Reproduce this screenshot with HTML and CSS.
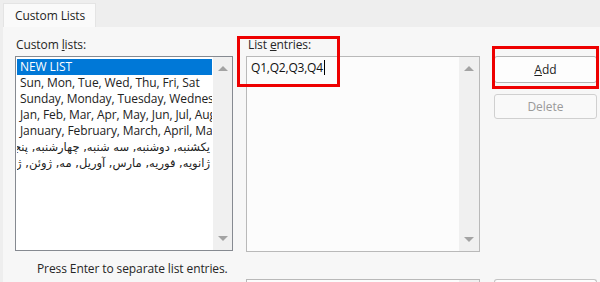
FILE: index.html
```html
<!DOCTYPE html>
<html lang="en">
<head>
  <meta charset="UTF-8">
  <title>Custom Lists</title>
  <link rel="stylesheet" href="styles.css">
</head>
<body>

  <!-- tab strip -->
  <div class="tabs">
    <div class="tab">Custom Lists</div>
  </div>

  <div class="panel">
    <div class="row">

      <!-- left: custom lists -->
      <div class="col col-lists">
        <div class="label">Custom <u>l</u>ists:</div>
        <div class="listbox">
          <ul class="items">
            <li class="selected">NEW LIST</li>
            <li>Sun, Mon, Tue, Wed, Thu, Fri, Sat</li>
            <li>Sunday, Monday, Tuesday, Wednesday, Thursday, Friday, Saturday</li>
            <li>Jan, Feb, Mar, Apr, May, Jun, Jul, Aug, Sep, Oct, Nov, Dec</li>
            <li>January, February, March, April, May, June, July, August</li>
            <li class="rtl">یکشنبه, دوشنبه, سه شنبه, چهارشنبه, پنجشنبه, جمعه, شنبه</li>
            <li class="rtl">ژانویه, فوریه, مارس, آوریل, مه, ژوئن, ژوئیه, اوت</li>
          </ul>
          <div class="scrollbar">
            <span class="arrow up"></span>
            <span class="arrow down"></span>
          </div>
        </div>
      </div>

      <!-- middle: entries -->
      <div class="col col-entries">
        <div class="label">List <u>e</u>ntries:</div>
        <div class="textbox">
          <div class="entry">Q1,Q2,Q3,Q4<span class="caret"></span></div>
          <div class="scrollbar wide">
            <span class="arrow up"></span>
            <span class="arrow down"></span>
          </div>
        </div>
      </div>

      <!-- right: buttons -->
      <div class="col col-buttons">
        <button class="btn"><u>A</u>dd</button>
        <button class="btn" disabled>Delete</button>
      </div>
    </div>

    <p class="hint">Press Enter to separate list entries.</p>

    <div class="row next">
      <div class="stub-left"></div>
      <div class="stub-field"><span class="stub-bar"></span></div>
      <div class="stub-btn"></div>
    </div>
  </div>

  <!-- annotation boxes -->
  <div class="mark mark-entries"></div>
  <div class="mark mark-add"></div>

</body>
</html>
```

FILE: styles.css
```css
html, body {
  overflow: hidden;
}

body {
  margin: 0;
  height: 282px;
  background: #eeeeee;
  font-family: "Open Sans", "DejaVu Sans", sans-serif;
  font-size: 12px;
  letter-spacing: -0.1px;
  color: #1e1e1e;
  position: relative;
}

.tabs {
  height: 27px;
  padding-left: 3px;
  display: flex;
  align-items: flex-end;
}

.tab {
  width: 93px;
  height: 24px;
  padding-left: 11px;
  line-height: 23px;
  background: #fafafa;
  border: 1px solid #e4e4e4;
  border-bottom: none;
  box-sizing: border-box;
  white-space: nowrap;
}

.panel {
  margin-left: 3px;
  background: #f7f7f7;
  padding: 10px 0 0 12px;
  height: 245px;
  overflow: hidden;
}

.row {
  display: flex;
}

.col-lists {
  width: 218px;
}

.col-entries {
  width: 234px;
  margin-left: 13px;
}

.col-buttons {
  width: 103px;
  margin-left: 14px;
  padding-top: 19px;
  display: flex;
  flex-direction: column;
}

.label {
  line-height: 16px;
  height: 16px;
  margin-bottom: 3px;
  padding-left: 1px;
  color: #262626;
}

.col-entries .label {
  padding-left: 2px;
}

.listbox {
  height: 195px;
  border: 1px solid #868a91;
  background: #ffffff;
  box-sizing: border-box;
  display: flex;
}

.items {
  list-style: none;
  margin: 0;
  padding: 2px 1px 0 1px;
  width: 195px;
  overflow: hidden;
}

.items li {
  height: 16px;
  line-height: 16px;
  padding-left: 3px;
  white-space: nowrap;
  overflow: hidden;
  color: #222;
}

.items li.selected {
  background: #0078d7;
  color: #ffffff;
}

.items li.rtl {
  direction: rtl;
  text-align: right;
  padding-left: 0;
  padding-right: 2px;
  font-family: "DejaVu Sans", sans-serif;
  font-size: 11.5px;
  letter-spacing: 0;
}

.scrollbar {
  margin-left: auto;
  width: 19px;
  background: #f0f0f0;
  display: flex;
  flex-direction: column;
  justify-content: space-between;
  align-items: center;
  padding: 9px 0;
}

.scrollbar.wide {
  width: 20px;
}

.arrow {
  width: 0;
  height: 0;
  border-left: 5px solid transparent;
  border-right: 5px solid transparent;
}

.arrow.up {
  border-bottom: 5px solid #a3a3a3;
}

.arrow.down {
  border-top: 5px solid #a3a3a3;
}

.textbox {
  margin-top: 1px;
  height: 196px;
  border: 1px solid #b9b9b9;
  background: #fcfcfc;
  box-sizing: border-box;
  display: flex;
}

.entry {
  padding: 3px 0 0 4px;
  line-height: 16px;
  letter-spacing: -0.2px;
  color: #111;
}

.caret {
  display: inline-block;
  width: 1px;
  height: 15px;
  background: #000;
  vertical-align: -3px;
  margin-left: 1px;
}

.btn {
  font-family: inherit;
  font-size: 12px;
  height: 27px;
  background: #fdfdfd;
  border: 1px solid #b4b4b4;
  border-radius: 3px;
  color: #1e1e1e;
  padding: 0;
}

.btn + .btn {
  margin-top: 11px;
  height: 25px;
}

.btn:disabled {
  color: #9a9a9a;
  border-color: #d0d0d0;
  background: #f9f9f9;
}

.hint {
  margin: 9px 0 0 22px;
  line-height: 16px;
  color: #262626;
}

.next {
  margin-top: 2px;
}

.stub-left {
  width: 218px;
}

.stub-field {
  width: 234px;
  margin-left: 13px;
  height: 4px;
  border: 1px solid #b9b9b9;
  border-bottom: none;
  background: #fcfcfc;
  box-sizing: border-box;
  display: flex;
  justify-content: flex-end;
}

.stub-bar {
  width: 20px;
  background: #f0f0f0;
}

.stub-btn {
  width: 103px;
  margin-left: 14px;
  height: 4px;
  border: 1px solid #c4c4c4;
  border-bottom: none;
  border-radius: 3px 3px 0 0;
  background: #fdfdfd;
  box-sizing: border-box;
}

/* red annotation rectangles drawn over the dialog */
.mark {
  position: absolute;
  border: 3px solid #ee0000;
  box-sizing: border-box;
}

.mark-entries {
  left: 237px;
  top: 36px;
  width: 103px;
  height: 51px;
}

.mark-add {
  left: 492px;
  top: 46px;
  width: 107px;
  height: 43px;
}
```
